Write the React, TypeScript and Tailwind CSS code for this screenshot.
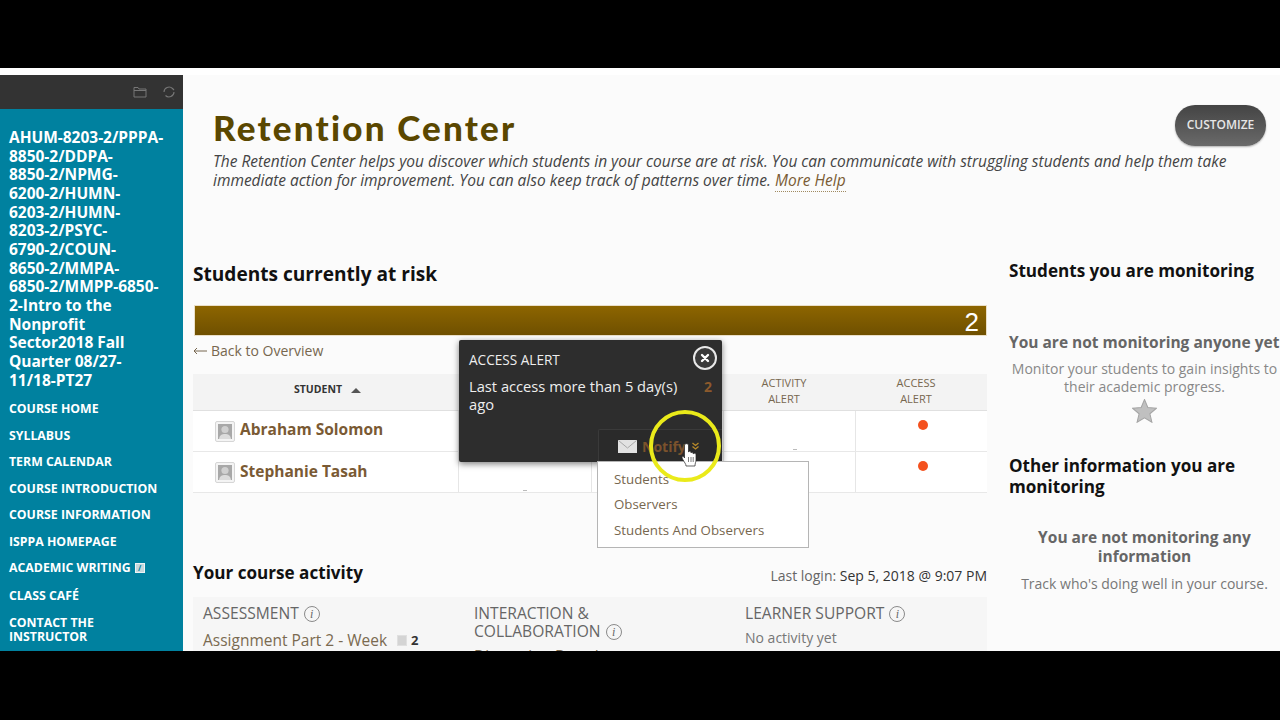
import React from "react";

const font = { fontFamily: '"Open Sans", "Noto Sans", sans-serif' };

function Info() {
  return (
    <span className="inline-flex items-center justify-center w-[16px] h-[16px] rounded-full border border-[#8a8a8a] text-[12px] leading-none italic text-[#666] ml-[5px] align-[1px]" style={{ fontFamily: '"Liberation Serif", serif' }}>
      i
    </span>
  );
}

function Avatar() {
  return (
    <svg width="20" height="21" viewBox="0 0 20 21" className="shrink-0">
      <rect x="0.5" y="0.5" width="19" height="20" rx="1.5" fill="#f4f4f4" stroke="#d6d6d6" />
      <rect x="3" y="3" width="14" height="15" fill="#a8a8a8" />
      <circle cx="10" cy="8.5" r="3.6" fill="#d0d0d0" />
      <path d="M4 18c.5-4 3-5 6-5s5.500 1 6 5z" fill="#dcdcdc" />
    </svg>
  );
}

const nav = ["COURSE HOME", "SYLLABUS", "TERM CALENDAR", "COURSE INTRODUCTION", "COURSE INFORMATION", "ISPPA HOMEPAGE"];
const cols = "grid grid-cols-[265px_133px_132px_132px_132px]";

export default function App() {
  return (
    <div className="w-[1280px] h-[720px] bg-black overflow-hidden flex flex-col" style={font}>
      <div className="h-[68px] shrink-0" />
      <div className="h-[7px] bg-white shrink-0" />
      <div className="h-[576px] shrink-0 flex bg-[#fbfbfb] overflow-hidden">
        {/* sidebar */}
        <aside className="w-[183px] shrink-0 flex flex-col">
          <div className="h-[34px] bg-[#333333] flex items-center justify-end gap-[15px] pr-[7px] shrink-0">
            <svg width="14" height="12" viewBox="0 0 14 12" fill="none" stroke="#777" strokeWidth="1">
              <path d="M1 11V1.500h4l1 1.500h7v8z M1 4.500h12" />
            </svg>
            <svg width="14" height="14" viewBox="0 0 14 14" fill="none" stroke="#777" strokeWidth="1.100">
              <path d="M2 7a5 5 0 0 1 8.500-3.500L12 5 M12 7a5 5 0 0 1-8.500 3.500" />
            </svg>
          </div>
          <div className="flex-1 bg-[#00819f] pl-[9px] pr-[8px] pt-[19px] text-white font-bold overflow-hidden">
            <div className="text-[15.500px] leading-[18.650px] tracking-[-0.02px] whitespace-nowrap">
              AHUM-8203-2/PPPA-
              <br />
              8850-2/DDPA-
              <br />
              8850-2/NPMG-
              <br />
              6200-2/HUMN-
              <br />
              6203-2/HUMN-
              <br />
              8203-2/PSYC-
              <br />
              6790-2/COUN-
              <br />
              8650-2/MMPA-
              <br />
              6850-2/MMPP-6850-
              <br />
              2-Intro to the
              <br />
              Nonprofit
              <br />
              Sector2018 Fall
              <br />
              Quarter 08/27-
              <br />
              11/18-PT27
            </div>
            <ul className="mt-[12px] text-[12.300px] leading-[15px] flex flex-col gap-[11.500px]">
              {nav.map((n) => (
                <li key={n}>{n}</li>
              ))}
              <li className="flex items-center gap-1">
                ACADEMIC WRITING
                <span className="w-[10px] h-[10px] bg-[#c8d8dc] border border-white/70 text-[#00819f] text-[8px] leading-[8px] text-center">/</span>
              </li>
              <li className="mt-[1px]">CLASS CAFÉ</li>
              <li className="leading-[14px] mt-[2px]">
                CONTACT THE
                <br />
                INSTRUCTOR
              </li>
            </ul>
          </div>
        </aside>

        {/* main */}
        <main className="relative flex-1 min-w-0 ml-[1px]">
          <div className="flex">
            <div className="pl-[29px] pt-[29px] pb-[1px] flex-1">
              <h1 className="text-[35px] leading-[46px] font-black text-[#5a4700] tracking-[2.200px]" style={{ fontFamily: '"Lato", sans-serif' }}>
                Retention Center
              </h1>
            </div>
            <button className="mt-[30px] mr-[14px] w-[91px] h-[41px] rounded-[20px] bg-gradient-to-b from-[#444444] to-[#6a6a6a] text-[#e6e6e6] text-[12px] font-semibold shadow-[0_1px_2px_rgba(0,0,0,0.3)] pb-[2px]">
              CUSTOMIZE
            </button>
          </div>
          <p className="ml-[29px] mr-[40px] mt-[1px] text-[15.490px] leading-[19px] italic text-[#444]">
            The Retention Center helps you discover which students in your course are at risk. You can communicate with struggling students and help them take immediate action for improvement. You can also keep track of patterns over time.{" "}
            <span className="text-[#7a5c34] border-b border-dotted border-[#a08a60]">More Help</span>
          </p>

          <div className="flex mt-[71px] pl-[9px]">
            {/* left column */}
            <div className="w-[794px] shrink-0">
              <h2 className="text-[19.100px] leading-[26px] font-bold text-[#111]">Students currently at risk</h2>
              <div className="mt-[18px] h-[31px] ml-[1px] border border-[#eadfc8] bg-gradient-to-b from-[#8d6500] to-[#6f5000] flex items-center justify-end pr-[7px] pt-[3px] text-white text-[26px] font-normal" style={{ fontFamily: '"Liberation Sans", sans-serif' }}>
                2
              </div>
              <div className="mt-[4px] h-[22px] text-[14px] leading-[20px] text-[#77674f] flex items-center gap-[4px]">
                <svg width="14" height="8" viewBox="0 0 14 8" fill="none" stroke="#77674f" strokeWidth="1">
                  <path d="M14 4H1M4 1L1 4l3 3" />
                </svg>
                Back to Overview
              </div>

              <div className={`mt-[12px] ${cols} border-b border-[#e0e0e0] h-[37px] bg-[#f3f3f3] text-[11px] leading-[15.500px] text-[#77674f] text-center`}>
                <div className="flex items-center justify-center gap-[9px] font-bold text-[#333] text-[10.500px] pb-[4px] pl-[4px]">
                  STUDENT
                  <span className="w-0 h-0 border-x-[5px] border-x-transparent border-b-[5px] border-b-[#555]" />
                </div>
                <div className="flex items-center justify-center pb-[3px]">
                  MISSED
                  <br />
                  DEADLINES
                </div>
                <div className="flex items-center justify-center pb-[3px]">
                  GRADE
                  <br />
                  ALERT
                </div>
                <div className="flex items-center justify-center pr-[10px] pb-[3px]">
                  ACTIVITY
                  <br />
                  ALERT
                </div>
                <div className="flex items-center justify-center pr-[10px] pb-[3px]">
                  ACCESS
                  <br />
                  ALERT
                </div>
              </div>
              {["Abraham Solomon", "Stephanie Tasah"].map((name, i) => (
                <div key={name} className={`${cols} h-[41px] bg-white border-b border-[#e8e8e8]`}>
                  <div className="flex items-center gap-[5px] pl-[22px] text-[15.500px] font-bold text-[#7a5a34]">
                    <Avatar />
                    <span className={i === 0 ? "mb-[3px]" : "mb-[1px]"}>{name}</span>
                  </div>
                  <div className="border-l border-[#e6e6e6] flex items-end justify-center">
                    {i === 1 && <span className="w-[4px] h-[1px] mb-[1px] bg-[#bbbbbb]" />}
                  </div>
                  <div className="border-l border-[#e6e6e6]" />
                  <div className="border-l border-[#e6e6e6] flex items-end justify-center">
                    {i === 0 && <span className="w-[4px] h-[1px] mb-[1px] bg-[#bbbbbb] ml-[10px]" />}
                  </div>
                  <div className="border-l border-[#e6e6e6] flex justify-center pt-[9px]">
                    <span className="w-[10px] h-[10px] rounded-full bg-[#f4511e] ml-[3px]" />
                  </div>
                </div>
              ))}

              <div className="mt-[67px] flex items-end justify-between h-[26px]">
                <h2 className="text-[17.100px] leading-[26px] font-bold text-[#111]">Your course activity</h2>
                <div className="text-[14px] leading-[20px] text-[#666]">
                  Last login: <span className="text-[#333]">Sep 5, 2018 @ 9:07 PM</span>
                </div>
              </div>
              <div className="mt-[11px] bg-[#f6f6f6] grid grid-cols-[271px_271px_1fr] pl-[10px] pt-[6px] h-[100px] text-[#666]">
                <div>
                  <div className="text-[15.600px] leading-[20px]">
                    ASSESSMENT
                    <Info />
                  </div>
                  <div className="mt-[7px] text-[15.500px] leading-[20px] text-[#7a6a50] flex items-center whitespace-nowrap">
                    Assignment Part 2 - Week
                    <span className="ml-[10px] w-[10px] h-[11px] bg-[#d4d4d4] border border-[#e0e0e0]" />
                    <span className="ml-[4px] font-bold text-[13px] text-[#333]">2</span>
                  </div>
                </div>
                <div className="pt-[1px]">
                  <div className="text-[15.600px] leading-[18px]">
                    INTERACTION &amp;
                    <br />
                    COLLABORATION
                    <Info />
                  </div>
                  <div className="mt-[6px] text-[15.500px] leading-[20px] text-[#7a6a50]">Discussion Board</div>
                </div>
                <div>
                  <div className="text-[15.600px] leading-[20px]">
                    LEARNER SUPPORT
                    <Info />
                  </div>
                  <div className="mt-[5px] text-[14px] leading-[20px] text-[#777]">No activity yet</div>
                </div>
              </div>
            </div>

            {/* right column */}
            <div className="ml-[22px] w-[271px] shrink-0 -mt-[3px]">
              <h2 className="text-[17.100px] leading-[26px] font-bold text-[#111]">Students you are monitoring</h2>
              <div className="mt-[46px] text-[15.500px] leading-[24px] font-bold text-[#666] whitespace-nowrap">You are not monitoring anyone yet</div>
              <p className="mt-[6px] text-[14px] leading-[18px] text-[#888] text-center">
                Monitor your students to gain insights to
                <br />
                their academic progress.
              </p>
              <div className="flex justify-center mt-[3px]">
                <svg width="25" height="24" viewBox="0 0 24 23">
                  <path d="M12 0.500l3.200 7.600 8.300.7-6.300 5.400 1.900 8.100L12 18l-7.100 4.300 1.900-8.100L.5 8.800l8.300-.7z" fill="#c0c0c0" stroke="#a5a5a5" />
                </svg>
              </div>
              <h2 className="mt-[33px] text-[17.100px] leading-[20.500px] font-bold text-[#111]">
                Other information you are
                <br />
                monitoring
              </h2>
              <div className="mt-[31px] text-[15.500px] leading-[19px] font-bold text-[#666] text-center">
                You are not monitoring any
                <br />
                information
              </div>
              <p className="mt-[9px] text-[14px] leading-[18px] text-[#777] text-center whitespace-nowrap">Track who's doing well in your course.</p>
            </div>
          </div>

          {/* tooltip overlay */}
          <div className="absolute left-[275px] top-[265px] w-[263px] h-[122px] bg-[#2d2d2d] rounded-[2px] shadow-[0_2px_6px_rgba(0,0,0,0.5)] text-[#eeeeee]">
            <div className="absolute left-[10px] top-[10px] text-[13.600px] leading-[20px] whitespace-nowrap">ACCESS ALERT</div>
            <div className="absolute left-[10px] top-[38px] w-[225px] text-[14.700px] leading-[17.500px]">Last access more than 5 day(s) ago</div>
            <div className="absolute right-[10px] top-[38px] text-[14px] leading-[17px] font-bold text-[#8c5a2c]">2</div>
            <div className="absolute right-[5px] top-[6px] w-[24px] h-[24px] rounded-full border-2 border-[#e8e8e8] bg-[#3a3a3a] flex items-center justify-center">
              <svg width="10" height="10" viewBox="0 0 10 10" stroke="#fff" strokeWidth="2.400" strokeLinecap="round">
                <path d="M2 2l6 6M8 2l-6 6" />
              </svg>
            </div>
            <div className="absolute left-[139px] top-[89px] w-[124px] h-[33px] bg-[#2a2a2a] border-t border-l border-[#3a3a3a] rounded-tl-[2px] flex items-center pl-[19px] gap-[5px]">
              <svg width="19" height="13" viewBox="0 0 19 13">
                <rect width="19" height="13" fill="#e2e2e2" />
                <path d="M0.500 0.500L9.500 8l9-7.500" fill="none" stroke="#a8a8a8" />
              </svg>
              <span className="text-[14px] font-bold text-[#7b522c]">Notify</span>
            </div>
          </div>
          <div className="absolute left-[413px] top-[386px] w-[212px] h-[87px] bg-white border border-[#b5b5b5] pl-[16px] pt-[4.500px] text-[13.300px] text-[#77674f] leading-[25.700px] whitespace-nowrap">
            <div>Students</div>
            <div>Observers</div>
            <div>Students And Observers</div>
          </div>

          {/* cursor highlight */}
          <div className="absolute left-[465px] top-[335px] w-[72px] h-[72px] rounded-full border-[4px] border-[#eaea1a]" />
          <svg className="absolute left-[507px] top-[367px]" width="9" height="9" viewBox="0 0 9 9" fill="none" stroke="#b88a2a" strokeWidth="1.300">
            <path d="M1.500 1l3 2.500 3-2.500M1.500 4.500l3 2.500 3-2.500" />
          </svg>
          <svg className="absolute left-[497px] top-[368px]" width="16" height="24" viewBox="0 0 16 24">
            <path d="M3.500 2C3.500 .2 7.500 .2 7.500 2V9C7.500 8 10 8 10 9.200V10C10 9 12.200 9 12.200 10.200V11C12.200 10 15 10 15 11.500V17C15 19 14 20 14 23H5C5 21 3.500 19.500 1.500 16C.2 13.800 2 12.500 3 14L3.500 15Z" fill="#fff" stroke="#222" strokeWidth="0.700" />
            <path d="M7.500 14v5M10 14v5M12.200 14v5" stroke="#222" strokeWidth="0.600" />
          </svg>
        </main>
      </div>
      <div className="flex-1" />
    </div>
  );
}
